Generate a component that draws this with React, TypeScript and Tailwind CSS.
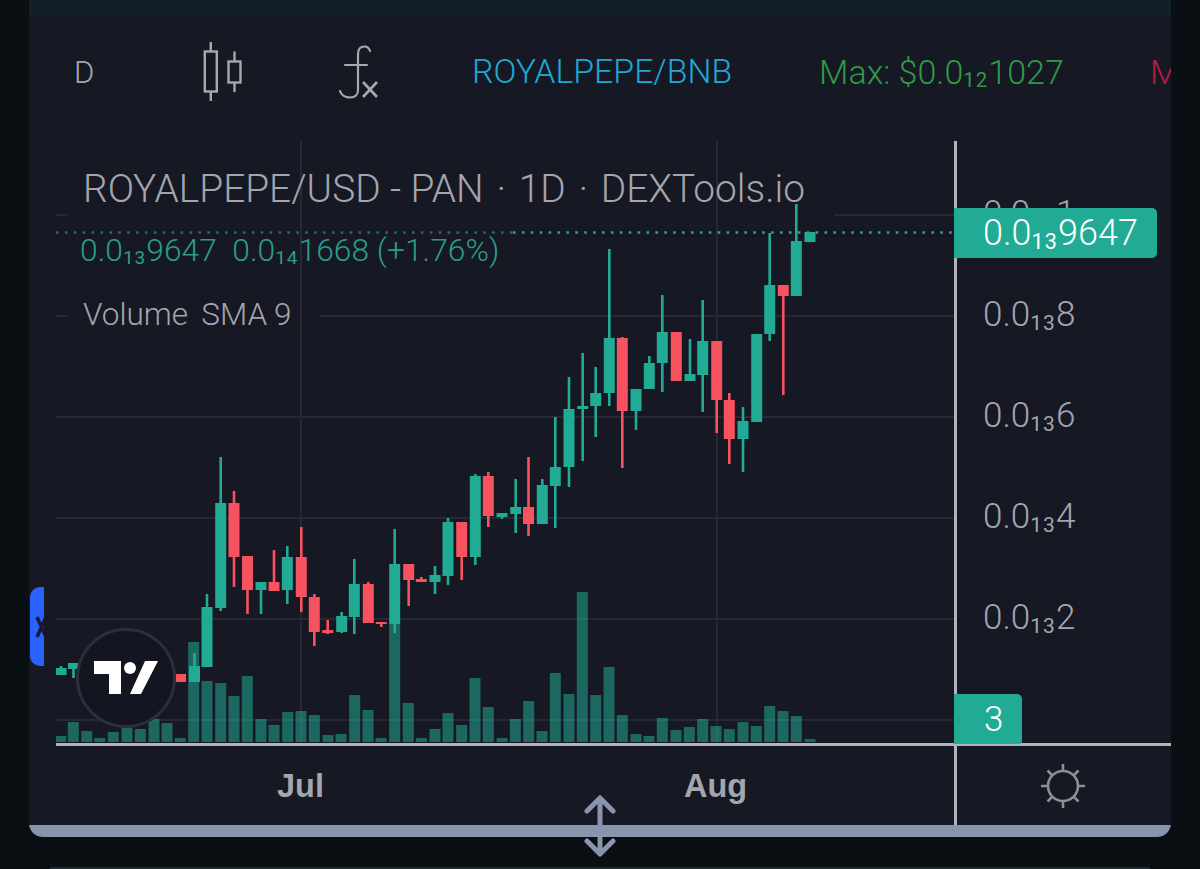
const G = "#22ab94";
const R = "#f7525f";

// [x, wickTop, bodyTop, bodyBottom, wickBottom, up]
const candles: [number, number, number, number, number, number][] = [
  [61, 666, 668, 675, 675, 1],
  [73.5, 663, 663, 669, 678, 1],
  [180.5, 674, 674, 682, 682, 0],
  [194.5, 653, 666, 682, 682, 1],
  [207, 594, 607, 667, 667, 1],
  [220.7, 457, 503, 608, 611, 1],
  [234, 491, 503, 557, 587, 0],
  [247.5, 556, 556, 590, 614, 0],
  [261, 582, 582, 590, 614, 1],
  [274, 550, 582, 591, 591, 0],
  [287.3, 546, 557, 590, 604, 1],
  [301.3, 527, 557, 597, 612, 0],
  [314.3, 594, 597, 632, 646, 0],
  [327.7, 620, 630, 633, 634, 0],
  [341.7, 612, 616, 632, 633, 1],
  [354.3, 559, 584, 617, 634, 1],
  [368.3, 582, 584, 623, 623, 0],
  [381.3, 622, 622, 624, 627, 0],
  [394.7, 529, 564, 624, 633, 1],
  [408.7, 564, 564, 580, 606, 0],
  [421.3, 577, 579, 582, 582, 0],
  [435, 566, 575, 582, 594, 1],
  [448, 518, 522, 576, 585, 1],
  [461.7, 522, 522, 557, 580, 0],
  [475.3, 474, 476, 557, 565, 1],
  [488.3, 472, 476, 516, 527, 0],
  [502, 513, 513, 517, 519, 1],
  [515.7, 479, 507, 514, 533, 1],
  [528.5, 457, 507, 524, 536, 0],
  [542.3, 479, 485, 524, 524, 1],
  [555.3, 417, 467, 486, 528, 1],
  [569, 377, 409, 467, 487, 1],
  [582.7, 353, 406, 409, 461, 1],
  [595.7, 367, 393, 406, 437, 1],
  [609.3, 249, 338, 393, 406, 1],
  [622.3, 337, 338, 411, 468, 0],
  [636, 389, 389, 411, 430, 1],
  [649.3, 356, 363, 389, 389, 1],
  [662.3, 295, 332, 363, 392, 1],
  [676.3, 332, 332, 381, 381, 0],
  [690, 339, 374, 381, 381, 1],
  [702.7, 300, 341, 375, 412, 1],
  [716.7, 341, 341, 400, 433, 0],
  [729.3, 393, 400, 439, 464, 0],
  [743, 407, 421, 439, 472, 1],
  [756.7, 334, 334, 422, 422, 1],
  [769.7, 233, 285, 334, 341, 1],
  [783.3, 285, 285, 296, 395, 0],
  [796.3, 204, 241, 296, 296, 1],
  [810, 232, 232, 242, 242, 1],
];

const volumes: [number, number][] = [
  [60.7, 736], [73.3, 722], [86.7, 731], [99.7, 738], [113.3, 732], [127, 726], [140.3, 729], [154, 719], [167, 723], [180.3, 738],
  [193.7, 642], [207, 681], [220.7, 683], [234, 696], [247.3, 676], [261, 719], [274, 725], [287.7, 712], [301, 711], [314.3, 715],
  [328, 735], [341, 734], [354.7, 695], [368, 710], [381, 738], [394.7, 624], [408.3, 703], [421.3, 738], [435, 729], [448, 713],
  [461.7, 725], [475, 678], [488.3, 707], [502, 738], [515.3, 719], [528.7, 701], [542, 731], [555.3, 673], [569, 694], [582.3, 592],
  [595.7, 695], [609, 667], [622.3, 715], [636, 734], [649, 736], [662.3, 718], [676, 730], [689.3, 727], [702.7, 719], [716, 726],
  [729.3, 729], [743, 722], [756.3, 726], [769.7, 706], [783, 711], [796.3, 716], [810, 739],
];

// Chart pane origin on the page.
const OX = 56;
const OY = 141;

// Grid segments: the legend hides the lines behind its rows.
const gridSegments: [number, number, number][] = [
  [215, OX, 68],
  [215, 834, 954],
  [316, OX, 68],
  [316, 320, 954],
  [417, OX, 954],
  [518, OX, 954],
  [619, OX, 954],
  [720, OX, 954],
];

function Sub({ children }: { children: string }) {
  return <span className="relative top-[0.17em] text-[0.6em] font-normal tracking-[0.05em] leading-none">{children}</span>;
}

function Chart() {
  return (
    <svg width={898} height={601} viewBox={`${OX} ${OY} 898 601`} className="block">
      {gridSegments.map(([y, a, b]) => (
        <line key={`${y}-${a}`} x1={a} x2={b} y1={y} y2={y} stroke="#262833" strokeWidth={2} />
      ))}
      {[301, 717].map((x) => (
        <line key={x} x1={x} x2={x} y1={OY} y2={742} stroke="#262833" strokeWidth={2} />
      ))}
      {volumes.map(([x, top]) => (
        <rect key={x} x={x - 5.5} y={top} width={11} height={742 - top} fill="#22ab94" opacity={0.55} />
      ))}
      <line x1={OX} x2={513} y1={232.5} y2={232.5} stroke={G} strokeWidth={2.6} strokeDasharray="2.6 6.3" opacity={0.6} />
      <line x1={513} x2={954} y1={232.5} y2={232.5} stroke={G} strokeWidth={2.6} strokeDasharray="2.6 6.3" />
      {candles.map(([x, wt, bt, bb, wb, up]) => {
        const c = up ? G : R;
        return (
          <g key={x} fill={c}>
            <rect x={x - 1.3} y={wt} width={2.6} height={wb - wt} />
            <rect x={x - 5.5} y={bt} width={11} height={Math.max(bb - bt, 2)} />
          </g>
        );
      })}
    </svg>
  );
}

function CandleIcon() {
  return (
    <svg width={46} height={60} viewBox="0 0 46 60" fill="none" stroke="#a7a8b0" strokeWidth={2.4}>
      <rect x={6.8} y={9.5} width={12} height={40} />
      <path d="M12.800 0v9.500M12.800 49.500V59" />
      <rect x={30.5} y={19.5} width={12} height={21} />
      <path d="M36.500 9.500v10M36.500 40.500V50" />
    </svg>
  );
}

function FxIcon() {
  return (
    <svg width={42} height={54} viewBox="0 0 42 54" fill="none" stroke="#a7a8b0" strokeWidth={2.2} strokeLinecap="round">
      <path d="M31 6c-1-3-3-4.500-5.500-4.500C21.500 1.500 19 4 19 9v36c0 4.500-3 7.500-7.500 7.500C6.500 52.500 2 50 1 46" />
      <path d="M6 20h22" />
      <path d="M24 37l14 15M38 37L24 52" strokeWidth={2.6} strokeLinecap="butt" />
    </svg>
  );
}

function TvLogo() {
  return (
    <svg width={64} height={34} viewBox="0 0 64 34" fill="#ffffff">
      <path d="M0 0h27v33H15V13H0z" />
      <circle cx={36} cy={7} r={6} />
      <path d="M51 0h13L47 33H36z" />
    </svg>
  );
}

function GearIcon() {
  return (
    <svg width={46} height={46} viewBox="0 0 46 46" fill="none" stroke="#8d8e96" strokeWidth={2.6}>
      <circle cx={23} cy={23} r={15} />
      <path d="M23 1v7M23 38v7M1 23h7M38 23h7M7.500 7.500l5 5M33.500 33.500l5 5M38.500 7.500l-5 5M12.500 33.500l-5 5" />
    </svg>
  );
}

function PriceTick({ digit, subText = "13" }: { digit: string; subText?: string }) {
  return (
    <div className="h-[101px] pl-[26px] flex items-center text-[#a4a5ad] text-[35px] leading-none font-light">
      <span>
        0.0<Sub>{subText}</Sub>
        {digit}
      </span>
    </div>
  );
}

export default function App() {
  return (
    <div
      className="relative w-[1200px] h-[869px] overflow-hidden bg-[#0a0f14] flex flex-col"
      style={{ fontFamily: "Roboto, 'Noto Sans', sans-serif" }}
    >
      <div className="mx-[29px] h-[17px] shrink-0 bg-[#131f27]" />

      {/* Main panel */}
      <div className="mx-[29px] h-[820px] shrink-0 flex flex-col bg-[#161824] relative overflow-hidden rounded-b-[14px]">
        {/* Toolbar */}
        <div className="h-[124px] shrink-0 flex items-center whitespace-nowrap pl-[45px] pb-[14px]">
          <span className="w-[124px] shrink-0 text-[#a7a8b0] text-[31px] font-light leading-none">D</span>
          <span className="w-[141px] shrink-0"><CandleIcon /></span>
          <span className="w-[133px] shrink-0"><FxIcon /></span>
          <span className="w-[347px] shrink-0 text-[#1ba9d6] text-[33.800px] leading-none font-light">ROYALPEPE/BNB</span>
          <span className="w-[331px] shrink-0 text-[#2f9a47] text-[34px] leading-none font-light">
            Max: $0.0<Sub>12</Sub>1027
          </span>
          <span className="shrink-0 text-[#b51f3f] text-[34px] leading-none font-light">Min</span>
        </div>

        {/* Chart and price scale */}
        <div className="flex h-[605px] shrink-0 pl-[27px]">
          <div className="relative w-[898px] h-[601px] overflow-hidden">
            <Chart />
            <div className="absolute left-[24px] top-[19px] flex flex-col items-start whitespace-nowrap">
              <div className="pl-[3px] text-[#a4a5ad] text-[38.800px] leading-[58px] font-light">
                ROYALPEPE/USD - PAN <span className="mx-[3.300px]">·</span> 1D <span className="mx-[3.300px]">·</span> DEXTools.io
              </div>
              <div className="mt-[12px] text-[#2a9d8a] text-[31.800px] leading-[40px] font-light">
                0.0<Sub>13</Sub>9647&nbsp; 0.0<Sub>14</Sub>1668 (+1.76%)
              </div>
              <div className="pl-[3px] mt-[27px] text-[#a4a5ad] text-[31.500px] [word-spacing:-1px] leading-[36px] font-light">
                Volume&nbsp; SMA 9
              </div>
            </div>
            <div className="absolute left-[20px] top-[487px] w-[100px] h-[100px] rounded-full bg-[#131520] border-[3px] border-[#2c2e39] flex items-center justify-center">
              <TvLogo />
            </div>
          </div>

          <div className="relative flex-1 border-l-[3px] border-[#b2b3bb]">
            <div className="flex flex-col pt-[22px]">
              <PriceTick digit="1" subText="12" />
              <PriceTick digit="8" />
              <PriceTick digit="6" />
              <PriceTick digit="4" />
              <PriceTick digit="2" />
            </div>
            <div className="absolute -left-[3px] top-[67px] w-[203px] h-[50px] rounded-r-[5px] bg-[#22ab94] text-white text-[36px] font-light flex items-center pl-[29px] leading-none">
              <span>
                0.0<Sub>13</Sub>9647
              </span>
            </div>
            <div className="absolute -left-[3px] top-[553px] w-[68px] h-[50px] rounded-tr-[5px] rounded-br-[3px] bg-[#22ab94] text-white text-[35px] font-light flex items-center pl-[30px] leading-none">
              3
            </div>
          </div>
        </div>

        <div className="ml-[27px] h-[3px] -mt-[3px] shrink-0 bg-[#b2b3bb]" />

        {/* Time scale */}
        <div className="flex flex-1 pl-[27px]">
          <div
            className="relative w-[898px] text-[#a4a5ad] text-[32.500px] font-bold leading-none pt-[24px]"
            style={{ fontFamily: "'Liberation Sans', Arial, sans-serif" }}
          >
            <span className="absolute left-[221px]">Jul</span>
            <span className="absolute left-[628px]">Aug</span>
          </div>
          <div className="flex-1 border-l-[3px] border-[#b2b3bb] flex justify-center pt-[17px] pr-[3px]">
            <GearIcon />
          </div>
        </div>

        {/* Bottom handle bar */}
        <div className="h-[12px] shrink-0 bg-[#8995ac]" />

        {/* Collapse tab */}
        <div className="absolute left-[1px] top-[570px] w-[14px] h-[79px] rounded-l-[10px] bg-[#2962ff] overflow-hidden flex items-center">
          <svg width={14} height={24} viewBox="0 0 14 24" fill="none" stroke="#131a3a" strokeWidth={3.5} className="shrink-0">
            <path d="M7 2l9 20M16 2L7 22" />
          </svg>
        </div>
      </div>

      {/* Resize arrows */}
      <svg width={32} height={62} viewBox="0 0 32 62" fill="none" stroke="#8995ac" strokeWidth={5} strokeLinecap="round" strokeLinejoin="round" className="absolute left-[584px] top-[795px]">
        <path d="M16 3v56M3 16L16 3l13 13M3 46l13 13 13-13" />
      </svg>

      <div className="mt-auto mx-[50px] h-[2px] bg-[#1f2d37] rounded-t" />
    </div>
  );
}
